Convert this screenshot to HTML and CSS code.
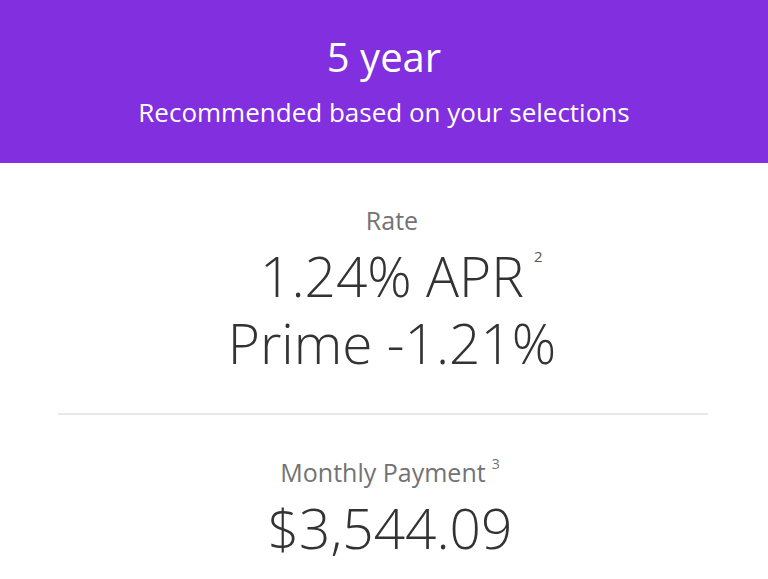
FILE: index.html
```html
<!DOCTYPE html>
<html lang="en">
<head>
  <meta charset="UTF-8">
  <meta name="viewport" content="width=device-width, initial-scale=1.0">
  <title>Recommended Term</title>
  <link rel="stylesheet" href="styles.css">
</head>
<body>
  <div class="term-card">
    <div class="term-header">
      <h1>5 year</h1>
      <p>Recommended based on your selections</p>
    </div>

    <div class="term-content">
      <div class="term-block">
        <div class="term-label">Rate</div>
        <div class="term-value"><span class="value-text">1.24% APR<sup class="note">2</sup></span></div>
        <div class="term-value">Prime -1.21%</div>
      </div>

      <div class="term-block">
        <div class="term-label">Monthly Payment<sup class="note-small">3</sup></div>
        <div class="term-value">$3,544.09</div>
      </div>
    </div>
  </div>
</body>
</html>
```

FILE: styles.css
```css
* {
  margin: 0;
  padding: 0;
  box-sizing: border-box;
}

body {
  font-family: 'Open Sans', 'Noto Sans', sans-serif;
  background: #ffffff;
  color: #333;
}

.term-card {
  width: 100%;
  min-height: 100vh;
}

.term-header {
  background: #812fdf;
  color: #ffffff;
  text-align: center;
  height: 163px;
  padding-top: 30px;
}

.term-header h1 {
  font-size: 40px;
  font-weight: 400;
  line-height: 54px;
}

.term-header p {
  font-size: 26px;
  line-height: 34px;
  margin-top: 11px;
}

.term-content {
  padding: 0 60px 0 58px;
}

.term-block {
  text-align: center;
  padding: 41px 0 37px 18px;
}

.term-block:first-child {
  border-bottom: 2px solid #e6e8ea;
}

.term-block:last-child {
  padding-left: 14px;
}

.term-label {
  font-size: 25px;
  color: #737373;
  line-height: 32px;
  margin-bottom: 6px;
}

.term-value {
  font-size: 55px;
  font-weight: 300;
  line-height: 67px;
  color: #333;
}

.value-text {
  position: relative;
}

.note {
  position: absolute;
  left: 100%;
  top: 11px;
  margin-left: 10px;
  font-size: 15px;
  line-height: 15px;
  font-weight: 400;
  color: #555;
}

.note-small {
  font-size: 14px;
  line-height: 14px;
  vertical-align: top;
  position: relative;
  top: 1px;
  margin-left: 6px;
}
```
